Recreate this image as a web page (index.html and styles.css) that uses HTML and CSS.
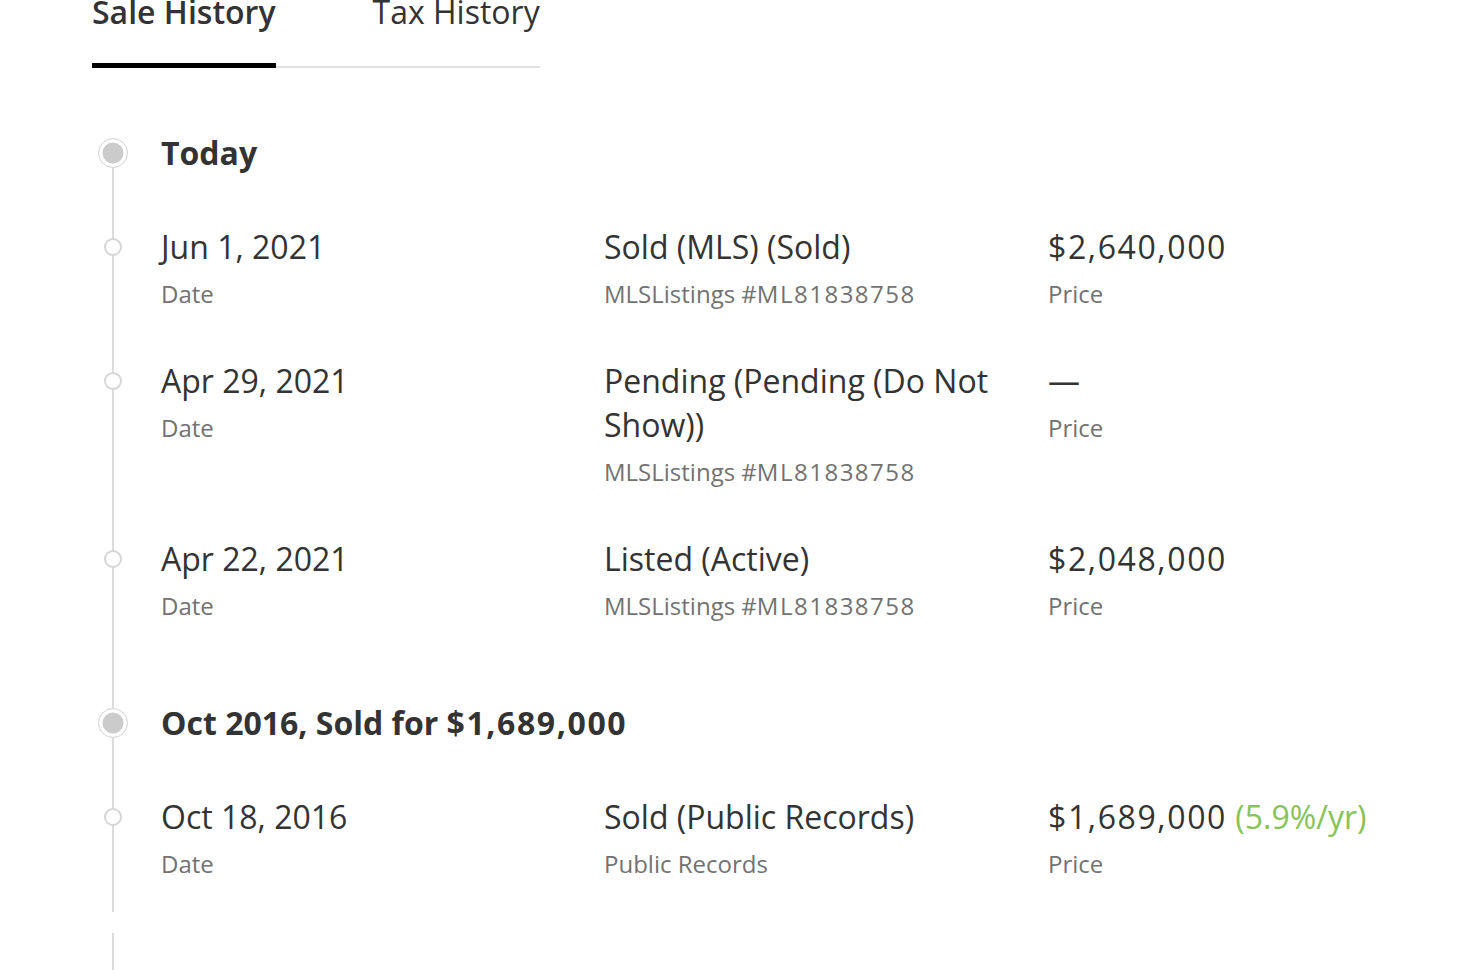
FILE: index.html
```html
<!DOCTYPE html>
<html lang="en">
<head>
<meta charset="utf-8">
<title>Sale History</title>
<link rel="stylesheet" href="styles.css">
</head>
<body>
<div class="page">
  <div class="tabs">
    <div class="tab active">Sale History</div>
    <div class="tab">Tax History</div>
  </div>

  <div class="timeline">
    <div class="event heading first">
      <div class="marker"><span class="dot big"></span></div>
      <div class="title">Today</div>
    </div>

    <div class="event row">
      <div class="marker"><span class="dot"></span></div>
      <div class="col"><div class="main">Jun 1, 2021</div><div class="sub">Date</div></div>
      <div class="col"><div class="main">Sold (MLS) (Sold)</div><div class="sub">MLSListings #<span class="num">ML81838758</span></div></div>
      <div class="col"><div class="main"><span class="amount">$2,640,000</span></div><div class="sub">Price</div></div>
    </div>

    <div class="event row">
      <div class="marker"><span class="dot"></span></div>
      <div class="col"><div class="main">Apr 29, 2021</div><div class="sub">Date</div></div>
      <div class="col"><div class="main">Pending (Pending (Do Not Show))</div><div class="sub">MLSListings #<span class="num">ML81838758</span></div></div>
      <div class="col"><div class="main">—</div><div class="sub">Price</div></div>
    </div>

    <div class="event row last-in-group">
      <div class="marker"><span class="dot"></span></div>
      <div class="col"><div class="main">Apr 22, 2021</div><div class="sub">Date</div></div>
      <div class="col"><div class="main">Listed (Active)</div><div class="sub">MLSListings #<span class="num">ML81838758</span></div></div>
      <div class="col"><div class="main"><span class="amount">$2,048,000</span></div><div class="sub">Price</div></div>
    </div>

    <div class="event heading">
      <div class="marker"><span class="dot big"></span></div>
      <div class="title">Oct 2016, Sold for <span class="amount">$1,689,000</span></div>
    </div>

    <div class="event row tail-row">
      <div class="marker"><span class="dot"></span></div>
      <div class="col"><div class="main">Oct 18, 2016</div><div class="sub">Date</div></div>
      <div class="col"><div class="main">Sold (Public Records)</div><div class="sub">Public Records</div></div>
      <div class="col"><div class="main"><span class="amount">$1,689,000</span> <span class="growth">(5.9%/yr)</span></div><div class="sub">Price</div></div>
    </div>

    <div class="line-break"></div>
    <div class="event continuation">
      <div class="marker"></div>
    </div>
  </div>
</div>
</body>
</html>
```
FILE: styles.css
```css
html, body {
  margin: 0;
  padding: 0;
  background: #fff;
}

body {
  font-family: "Open Sans", Lato, sans-serif;
  color: #333;
  height: 970px;
  overflow: hidden;
}

.page {
  padding-left: 92px;
  width: 1378px;
}

/* Tabs */
.tabs {
  display: flex;
  gap: 97px;
  width: 448px;
  margin-top: -8px;
  border-bottom: 2px solid #e2e2e2;
}

.tab {
  font-size: 32px;
  line-height: 40px;
  padding-bottom: 34px;
  color: #333;
  white-space: nowrap;
}

.tab.active {
  font-weight: 600;
  border-bottom: 5px solid #000;
  padding-bottom: 31px;
  margin-bottom: -2px;
}

/* Timeline */
.timeline {
  padding-top: 63px;
}

.event {
  display: grid;
  grid-template-columns: 69px 443px 444px 1fr;
  background-image: linear-gradient(#dcdcdc, #dcdcdc);
  background-repeat: no-repeat;
  background-size: 2px 100%;
  background-position: 20px 0;
}

.event.first {
  background-size: 2px calc(100% - 22px);
  background-position: 20px 100%;
}

.marker {
  display: flex;
  justify-content: center;
  width: 42px;
  align-items: flex-start;
}

.dot {
  display: block;
  box-sizing: border-box;
  width: 18px;
  height: 18px;
  margin-top: 13px;
  border-radius: 50%;
  border: 2px solid #d6d6d6;
  background: #fff;
}

.dot.big {
  width: 30px;
  height: 30px;
  margin-top: 7px;
  border: 1.5px solid #dadada;
  background: #cbcbcb;
  box-shadow: inset 0 0 0 3.5px #fff;
}

.heading {
  padding-bottom: 50px;
}

.heading .title {
  grid-column: 2 / 5;
  font-size: 32px;
  line-height: 44px;
  font-weight: 700;
  color: #333;
}

.row {
  padding-bottom: 49px;
}

.row.last-in-group {
  padding-bottom: 79px;
}

.row.tail-row {
  padding-bottom: 32px;
}

.col {
  padding-right: 30px;
}

.main {
  font-size: 32px;
  line-height: 44px;
  color: #333;
}

.amount {
  letter-spacing: 1.6px;
}

.sub {
  margin-top: 9px;
  font-size: 24px;
  line-height: 32px;
  color: #727272;
}

.num {
  letter-spacing: 1.5px;
}

.growth {
  color: #86c45a;
}

.line-break {
  height: 21px;
}

.continuation .marker {
  height: 60px;
}
```
